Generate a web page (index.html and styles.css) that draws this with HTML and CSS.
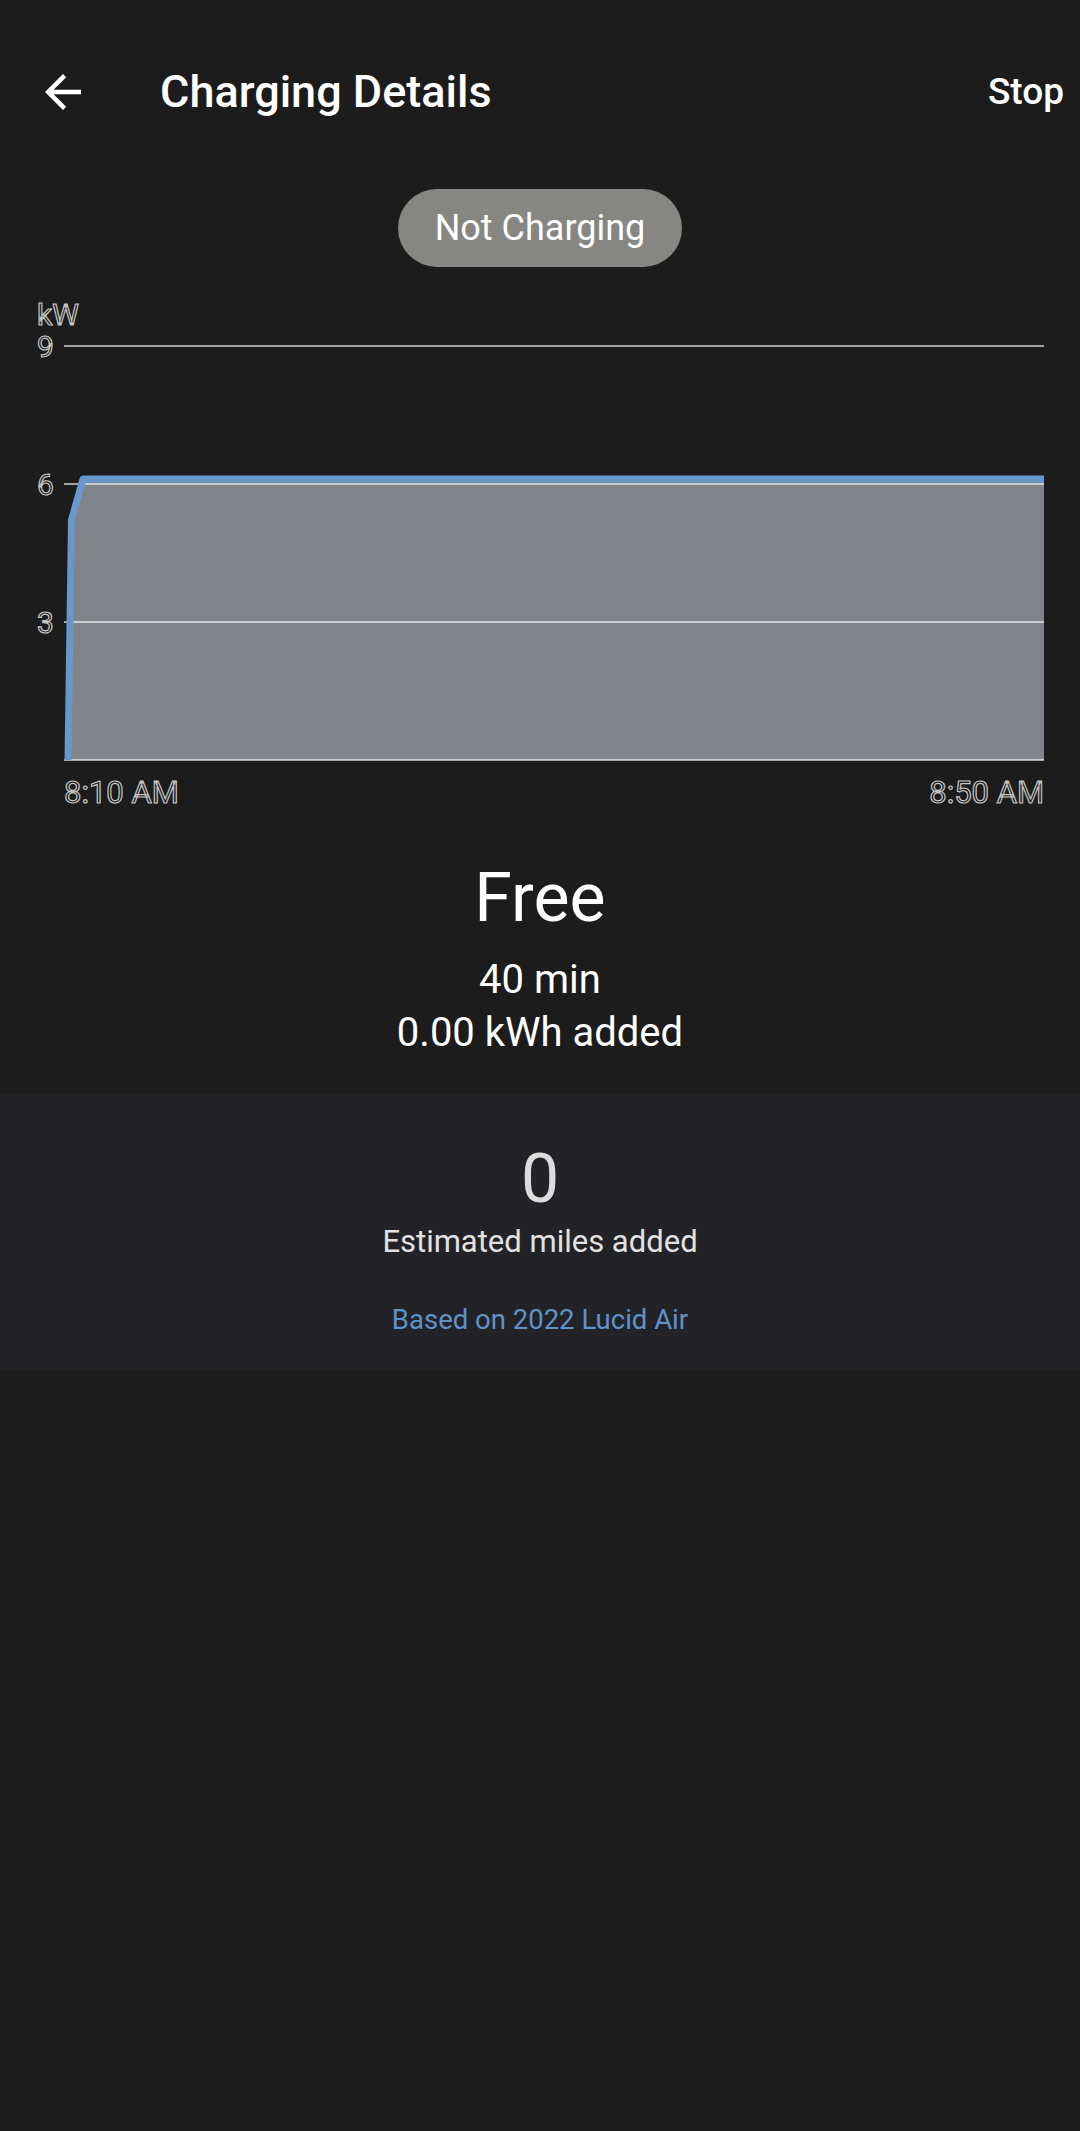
FILE: index.html
```html
<!DOCTYPE html>
<html lang="en">
<head>
<meta charset="utf-8">
<title>Charging Details</title>
<link rel="stylesheet" href="styles.css">
</head>
<body>
<div class="screen">
  <header class="topbar">
    <svg class="back" viewBox="0 0 24 24" width="54" height="54" aria-label="Back">
      <path d="M20 11H7.83l5.59-5.59L12 4l-8 8 8 8 1.41-1.41L7.83 13H20v-2z" fill="#ffffff"/>
    </svg>
    <h1 class="title">Charging Details</h1>
    <span class="stop">Stop</span>
  </header>

  <div class="status-row">
    <span class="pill">Not Charging</span>
  </div>

  <div class="chart">
    <svg width="1080" height="530" viewBox="0 0 1080 530">
      <path class="area" d="M68,470 L71.5,230 L83,189 L1044,189 L1044,470 Z"/>
      <line class="grid" x1="64" y1="56" x2="1044" y2="56"/>
      <line class="grid" x1="64" y1="194" x2="1044" y2="194"/>
      <line class="grid" x1="64" y1="332" x2="1044" y2="332"/>
      <line class="grid" x1="64" y1="470" x2="1044" y2="470"/>
      <polyline class="series" points="68,470 71.5,230 83,189 1044,189"/>
      <text class="axis" x="37" y="35">kW</text>
      <text class="axis" x="37" y="67">9</text>
      <text class="axis" x="37" y="205">6</text>
      <text class="axis" x="37" y="343">3</text>
      <text class="axis axis-x" x="64" y="513">8:10 AM</text>
      <text class="axis axis-x" x="1044" y="513" text-anchor="end">8:50 AM</text>
    </svg>
  </div>

  <section class="summary">
    <div class="price">Free</div>
    <div class="line">40 min</div>
    <div class="line">0.00 kWh added</div>
  </section>

  <section class="miles">
    <div class="miles-num">0</div>
    <div class="miles-label">Estimated miles added</div>
    <div class="miles-note">Based on 2022 Lucid Air</div>
  </section>
</div>
</body>
</html>
```

FILE: styles.css
```css
html, body {
  margin: 0;
  padding: 0;
  background: #1c1c1c;
}

body {
  font-family: Roboto, "Noto Sans", "Liberation Sans", sans-serif;
  color: #ffffff;
}

.screen {
  width: 1080px;
  min-height: 2131px;
  background: #1c1c1c;
}

.topbar {
  height: 184px;
  display: flex;
  align-items: center;
  padding: 0 16px 0 36px;
  box-sizing: border-box;
}

.back {
  display: block;
  flex: none;
}

.title {
  margin: 0 0 0 70px;
  font-size: 45px;
  font-weight: 500;
  line-height: 52px;
  flex: 1;
  color: #ffffff;
}

.stop {
  font-size: 37px;
  font-weight: 500;
  line-height: 44px;
  color: #ffffff;
}

.status-row {
  display: flex;
  justify-content: center;
  margin-top: 5px;
}

.pill {
  display: inline-flex;
  align-items: center;
  justify-content: center;
  height: 78px;
  width: 284px;
  box-sizing: border-box;
  border-radius: 39px;
  background: #868682;
  font-size: 36px;
  color: #ffffff;
}

.chart {
  margin-top: 23px;
  height: 530px;
}

.chart svg {
  display: block;
}

.area {
  fill: #808389;
}

.grid {
  stroke: rgba(255, 255, 255, 0.6);
  stroke-width: 2;
}

.series {
  fill: none;
  stroke: #6797cb;
  stroke-width: 7;
  stroke-linejoin: round;
}

.axis {
  font-family: Roboto, "Noto Sans", sans-serif;
  font-size: 30px;
  fill: #1c1c1c;
  stroke: #c4c4c4;
  stroke-width: 1.2;
}

.axis-x {
  font-size: 31px;
}

.summary {
  margin-top: 38px;
  padding-bottom: 35px;
  display: flex;
  flex-direction: column;
  align-items: center;
}

.price {
  font-size: 68px;
  line-height: 80px;
  color: #ffffff;
}

.line {
  font-size: 40px;
  line-height: 53px;
  color: #ffffff;
}

.price + .line {
  margin-top: 15px;
}

.miles {
  background: #232327;
  padding: 45px 0 33px;
  display: flex;
  flex-direction: column;
  align-items: center;
}

.miles-num {
  font-size: 68px;
  line-height: 80px;
  color: #dcdcdc;
}

.miles-label {
  margin-top: 4px;
  font-size: 31px;
  line-height: 38px;
  color: #e2e2e2;
}

.miles-note {
  margin-top: 42px;
  font-size: 27.5px;
  line-height: 34px;
  color: #5e93c9;
}
```
